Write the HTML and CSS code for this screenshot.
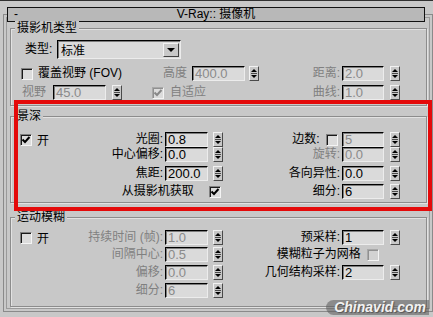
FILE: index.html
```html
<!DOCTYPE html>
<html lang="zh-CN">
<head>
	<meta charset="UTF-8">
	<title>V-Ray:: 摄像机</title>
	<link rel="stylesheet" href="styles.css">
</head>
<body>
	<div class="topline"></div>
	<div class="rollout">
		<div class="rollout-head">
			<span class="minus">-</span>
			<span class="head-title">V-Ray:: 摄像机</span>
			<span></span>
		</div>

		<!-- camera type -->
		<div class="group g-type">
			<div class="group-title">摄影机类型</div>
			<div class="row r-type">
				<span class="lbl type-lbl">类型:</span>
				<div class="combo"><span class="combo-text">标准</span><span class="combo-btn"></span></div>
			</div>
			<div class="row r-fov">
				<span class="cb"></span>
				<span class="lbl fov-lbl">覆盖视野 (FOV)</span>
				<span class="lbl off h-lbl">高度</span>
				<span class="field off w53">400.0</span>
				<span class="spin s-h"></span>
				<span class="lbl off dist-lbl">距离:</span>
				<span class="field off">2.0</span>
				<span class="spin s-r"></span>
			</div>
			<div class="row r-view">
				<span class="lbl off view-lbl">视野</span>
				<span class="field off w53">45.0</span>
				<span class="spin s-v"></span>
				<span class="cb on off auto-cb"></span>
				<span class="lbl off auto-lbl">自适应</span>
				<span class="lbl off curve-lbl">曲线:</span>
				<span class="field off">1.0</span>
				<span class="spin s-r"></span>
			</div>
		</div>

		<!-- depth of field -->
		<div class="group g-dof">
			<div class="group-title">景深</div>
			<div class="grow first">
				<span class="enable"><span class="cb on"></span>开</span>
				<span class="lbl c2">光圈:</span>
				<span class="field c3">0.8</span>
				<span class="spin c5"></span>
				<span class="lbl c6">边数: <span class="cb side-cb"></span></span>
				<span class="field off c7">5</span>
				<span class="spin c9"></span>
			</div>
			<div class="grow r2">
				<span class="lbl c2">中心偏移:</span>
				<span class="field c3">0.0</span>
				<span class="spin c5"></span>
				<span class="lbl off c6">旋转:</span>
				<span class="field off c7">0.0</span>
				<span class="spin c9"></span>
			</div>
			<div class="grow r3">
				<span class="lbl c2">焦距:</span>
				<span class="field c3">200.0</span>
				<span class="spin c5"></span>
				<span class="lbl c6">各向异性:</span>
				<span class="field c7">0.0</span>
				<span class="spin c9"></span>
			</div>
			<div class="grow r4">
				<span class="lbl c2-5">从摄影机获取 <span class="cb on get-cb"></span></span>
				<span class="lbl c6">细分:</span>
				<span class="field c7">6</span>
				<span class="spin c9"></span>
			</div>
		</div>

		<!-- motion blur -->
		<div class="group g-blur">
			<div class="group-title">运动模糊</div>
			<div class="grow first">
				<span class="enable"><span class="cb"></span>开</span>
				<span class="lbl off c2">持续时间 (帧):</span>
				<span class="field off c3">1.0</span>
				<span class="spin c5"></span>
				<span class="lbl c6">预采样:</span>
				<span class="field c7">1</span>
				<span class="spin c9"></span>
			</div>
			<div class="grow gap3">
				<span class="lbl off c2">间隔中心:</span>
				<span class="field off c3">0.5</span>
				<span class="spin c5"></span>
				<span class="lbl c6-7">模糊粒子为网格 <span class="cb off mesh-cb"></span></span>
			</div>
			<div class="grow gap3">
				<span class="lbl off c2">偏移:</span>
				<span class="field off c3">0.0</span>
				<span class="spin c5"></span>
				<span class="lbl c6">几何结构采样:</span>
				<span class="field c7">2</span>
				<span class="spin c9"></span>
			</div>
			<div class="grow gap3">
				<span class="lbl off c2">细分:</span>
				<span class="field off c3">6</span>
				<span class="spin c5"></span>
			</div>
		</div>
	</div>

	<!-- highlight frame drawn over the panel -->
	<div class="mark"></div>
	<div class="watermark">Chinavid.com</div>
</body>
</html>
```
FILE: styles.css
```css
body {
	margin: 0;
	width: 433px;
	height: 317px;
	overflow: hidden;
	position: relative;
	background-color: #c8c8c8;
	font-family: "Liberation Sans", "Noto Sans CJK SC", sans-serif;
	font-size: 12px;
	color: #000;
}
.topline {
	height: 1px;
	background-color: #303030;
}
.rollout {
	margin: 13px 0 0 3px;
	width: 430px;
	box-sizing: border-box;
	border: 1px solid #8a8a8a;
	box-shadow: inset 0 0 0 2px #c8c8c8, inset 0 0 0 3px #9a9a9a;
	padding-bottom: 4px;
}
.rollout-head {
	margin: -8px 7px 0 3px;
	height: 13px;
	line-height: 13px;
	border: 1px solid #111;
	background-color: #b8b8b8;
	display: grid;
	grid-template-columns: 1fr auto 1fr;
}
.minus {
	padding-left: 6px;
}
.group {
	margin: 0 5px 0 6px;
	border: 1px solid #8c8c8c;
	box-shadow: 1px 1px 0 #e2e2e2, inset 1px 1px 0 #e2e2e2;
}
.group-title {
	display: table;
	margin: -8px 0 0 4px;
	padding: 0 2px;
	line-height: 14px;
	background-color: #c8c8c8;
}
.g-type {
	margin-top: 6px;
	padding-bottom: 5px;
}
.g-dof {
	margin-top: 10px;
	padding-bottom: 3px;
}
.g-blur {
	margin-top: 14px;
	padding-bottom: 8px;
}

/* widgets */
.lbl {
	line-height: 15px;
	white-space: nowrap;
}
.off {
	color: #808080;
}
.field {
	box-sizing: border-box;
	width: 42px;
	height: 15px;
	padding: 0 0 0 2px;
	border: 1px solid;
	border-color: #000 #ececec #ececec #000;
	box-shadow: inset 1px 1px 0 #7c7c7c;
	background-color: #dadada;
	font-size: 13px;
	line-height: 13px;
	color: #000;
	overflow: hidden;
}
.field.off {
	color: #8a8a8a;
}
.w53 {
	width: 53px;
}
.spin {
	box-sizing: border-box;
	width: 10px;
	height: 15px;
	border: 1px solid;
	border-color: #f2f2f2 #4a4a4a #4a4a4a #f2f2f2;
	background: #c8c8c8 linear-gradient(#4a4a4a, #4a4a4a) center / 6px 1px no-repeat;
	display: flex;
	flex-direction: column;
	align-items: center;
	justify-content: space-around;
}
.spin::before {
	content: "";
	border: 3px solid transparent;
	border-top: 0;
	border-bottom-color: #000;
}
.spin::after {
	content: "";
	border: 3px solid transparent;
	border-bottom: 0;
	border-top-color: #000;
}
.cb {
	display: inline-block;
	box-sizing: border-box;
	width: 12px;
	height: 12px;
	border: 1px solid;
	border-color: #808080 #f4f4f4 #f4f4f4 #808080;
	box-shadow: inset 1px 1px 0 #1a1a1a;
	background-color: #dcdcdc;
	vertical-align: middle;
}
.cb.on {
	background: #dcdcdc url("data:image/svg+xml;utf8,<svg xmlns='http://www.w3.org/2000/svg' width='10' height='10'><polyline points='1.5,4.5 4,7 8.5,2' fill='none' stroke='black' stroke-width='2'/></svg>") center no-repeat;
}
.cb.on.off {
	background: #dcdcdc url("data:image/svg+xml;utf8,<svg xmlns='http://www.w3.org/2000/svg' width='10' height='10'><polyline points='1.5,4.5 4,7 8.5,2' fill='none' stroke='%23888' stroke-width='2'/></svg>") center no-repeat;
}
.cb.off {
	border-color: #a8a8a8 #f4f4f4 #f4f4f4 #a8a8a8;
	box-shadow: inset 1px 1px 0 #909090;
	background-color: #d2d2d2;
}

/* camera type rows */
.row {
	display: flex;
	align-items: center;
}
.r-type {
	margin-top: 5px;
	height: 19px;
}
.type-lbl {
	margin-left: 14px;
	width: 32px;
}
.combo {
	box-sizing: border-box;
	width: 124px;
	height: 19px;
	display: flex;
	align-items: center;
	justify-content: space-between;
	border: 1px solid;
	border-color: #000 #ececec #ececec #000;
	box-shadow: inset 1px 1px 0 #7c7c7c;
	background-color: #dadada;
	padding: 0 1px 0 3px;
}
.combo-btn {
	box-sizing: border-box;
	width: 16px;
	height: 14px;
	border: 1px solid;
	border-color: #f2f2f2 #404040 #404040 #f2f2f2;
	background-color: #c8c8c8;
	display: flex;
	align-items: center;
	justify-content: center;
}
.combo-btn::after {
	content: "";
	border: 4px solid transparent;
	border-bottom: 0;
	border-top-color: #000;
}
.r-fov {
	margin-top: 7px;
	height: 15px;
}
.r-fov .cb {
	margin-left: 10px;
}
.fov-lbl {
	margin-left: 5px;
	width: 125px;
}
.h-lbl {
	width: 29px;
}
.s-h {
	margin-left: 4px;
}
.dist-lbl, .curve-lbl {
	text-align: right;
	padding-right: 2px;
	box-sizing: border-box;
}
.dist-lbl {
	width: 83px;
}
.s-r {
	margin-left: 6px;
}
.r-view {
	margin-top: 4px;
	height: 15px;
}
.view-lbl {
	margin-left: 11px;
	width: 31px;
}
.s-v {
	margin-left: 6px;
}
.auto-cb {
	margin-left: 30px;
}
.auto-lbl {
	margin-left: 6px;
	width: 50px;
}
.curve-lbl {
	width: 122px;
}

/* two column grid rows */
.grow {
	display: grid;
	grid-template-columns: 46px 108px 43px 5px 10px 119px 42px 6px 10px;
	align-items: center;
	height: 15px;
}
.g-dof .first {
	margin-top: 8px;
}
.g-blur .first {
	margin-top: 5px;
}
.r2 {
	margin-top: 1px;
}
.r3 {
	margin-top: 4px;
}
.r4 {
	margin-top: 3px;
}
.gap3 {
	margin-top: 3px;
}
.enable {
	grid-column: 1;
	display: flex;
	align-items: center;
	gap: 5px;
	padding-left: 9px;
}
.grow .lbl {
	text-align: right;
	padding-right: 2px;
}
.c2 { grid-column: 2; }
.c3 { grid-column: 3; width: 43px; }
.c5 { grid-column: 5; }
.c6 { grid-column: 6; }
.c7 { grid-column: 7; }
.c9 { grid-column: 9; }
.c2-5 { grid-column: 2 / 6; }
.c6-7 { grid-column: 6 / 8; }
.grow .c6-7 {
	padding-right: 5px;
}
.side-cb {
	margin: 0 2px 0 3px;
}
.get-cb {
	margin-left: 12px;
}
.mesh-cb {
	margin-left: 3px;
}

/* overlays */
.mark {
	position: absolute;
	left: 14px;
	top: 100px;
	width: 418px;
	height: 111px;
	box-sizing: border-box;
	border: 4px solid #e40a0a;
}
.watermark {
	position: absolute;
	right: 4px;
	bottom: 2px;
	padding: 0 3px 0 8px;
	border-radius: 9px 0 0 9px;
	background-color: rgba(90, 90, 90, 0.55);
	color: #f2f2f2;
	font: italic bold 14px "Liberation Sans", sans-serif;
	line-height: 15px;
	text-shadow: 1px 1px 1px #555;
}
```
